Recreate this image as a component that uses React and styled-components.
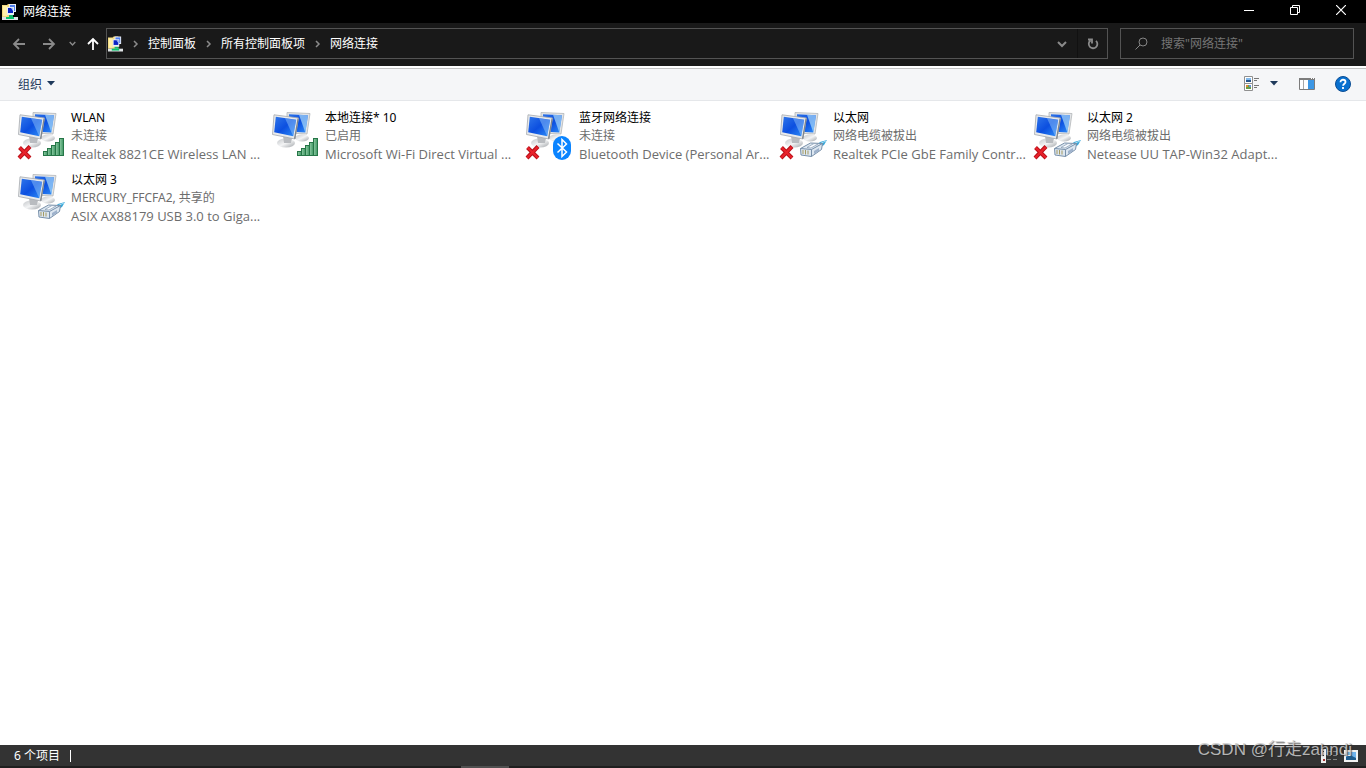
import React from "react";
import styled, { createGlobalStyle } from "styled-components";

const fonte = `"Noto Sans", "Noto Sans CJK SC", sans-serif`;
const fonteDevice = `"Open Sans", "Noto Sans CJK SC", sans-serif`;

const GlobalStyle = createGlobalStyle`
  * {
    box-sizing: border-box;
  }
  body {
    margin: 0;
    background: #ffffff;
    font-family: ${fonte};
    font-size: 12px;
  }
  button, input {
    margin: 0;
    padding: 0;
    border: none;
    background: none;
    color: inherit;
    font: inherit;
  }
  svg {
    display: block;
    flex-shrink: 0;
  }
`;

const Window = styled.div`
  position: relative;
  display: flex;
  flex-direction: column;
  min-height: 100vh;
`;
const TitleBar = styled.header`
  display: flex;
  align-items: center;
  height: 23px;
  padding: 0 2px;
  background: #000000;
  color: #ffffff;
`;
const Title = styled.h1`
  flex: 1;
  margin: 0 0 0 5px;
  font-size: 12px;
  font-weight: 400;
  line-height: 22px;
`;
const WindowButton = styled.button`
  display: flex;
  align-items: center;
  align-self: flex-start;
  justify-content: center;
  width: 46px;
  height: 20px;
`;
const NavBar = styled.nav`
  display: flex;
  align-items: center;
  height: 43px;
  padding: 0 12px 2px 4px;
  background: #191919;
`;
const NavButton = styled.button`
  display: flex;
  align-items: center;
  justify-content: center;
  width: ${(props) => props.$width}px;
  height: 29px;
  color: ${(props) => (props.$active ? "#ffffff" : "#8a8a8a")};
  border-left: ${(props) => (props.$divider ? "1px solid #111111" : "none")};
`;
const AddressBar = styled.div`
  display: flex;
  flex: 1;
  align-items: center;
  height: 31px;
  padding-left: 1px;
  border: 1px solid #535353;
`;
const Crumbs = styled.ol`
  display: flex;
  flex: 1;
  align-items: center;
  margin: 0;
  padding: 0;
  list-style: none;
`;
const Crumb = styled.li`
  display: flex;
  align-items: center;
  line-height: 28px;
  > svg {
    width: 25px;
  }
  a {
    color: #ffffff;
    text-decoration: none;
  }
`;
const SearchBox = styled.label`
  display: flex;
  align-items: center;
  width: 234px;
  height: 31px;
  margin-left: 12px;
  padding: 0 12px 0 14px;
  gap: 13px;
  border: 1px solid #535353;
  input {
    flex: 1;
    min-width: 0;
    height: 28px;
    outline: none;
    color: #ffffff;
  }
  input::placeholder {
    color: #757575;
    opacity: 1;
  }
`;
const CommandBar = styled.div`
  display: flex;
  align-items: center;
  height: 33px;
  margin-top: 2px;
  padding: 0 15px 2px 18px;
  border-top: 1px solid #c3c3c3;
  border-bottom: 1px solid #e5e7ea;
  background: #f5f6f8;
  color: #1e395b;
`;
const Organize = styled.button`
  display: flex;
  align-items: center;
  gap: 5px;
  margin-right: auto;
`;
const ToolButton = styled.button`
  display: flex;
  align-items: center;
  gap: 10px;
  margin-left: ${(props) => props.$space || 0}px;
`;
const Content = styled.main`
  flex: 1;
  padding: 8px 0 0 17px;
`;
const List = styled.ul`
  display: grid;
  grid-template-columns: repeat(auto-fill, 254px);
  grid-auto-rows: 62px;
  margin: 0;
  padding: 0;
  list-style: none;
`;
const Item = styled.button`
  display: flex;
  gap: 6px;
  width: 100%;
  text-align: left;
  white-space: nowrap;
  > svg {
    margin-top: 3px;
  }
`;
const Lines = styled.span`
  display: flex;
  flex-direction: column;
  color: #6d6d6d;
  line-height: 18px;
`;
const Name = styled.span`
  color: #000000;
`;
const Device = styled.span`
  font-family: ${fonteDevice};
  font-size: 13px;
`;
const StatusBar = styled.footer`
  display: flex;
  align-items: center;
  height: 21px;
  padding: 1px 8px 0 14px;
  background: #333333;
  color: #ffffff;
`;
const Count = styled.span`
  margin-right: auto;
  padding-right: 10px;
  border-right: 1px solid #ffffff;
  line-height: 12px;
`;
const ViewButton = styled.button`
  margin-left: 6px;
`;
const TaskEdge = styled.div`
  height: 2px;
  padding-left: 461px;
  background: #1f1f1f;
`;
const TaskMark = styled.div`
  width: 48px;
  height: 2px;
  background: #505050;
`;
const Watermark = styled.span`
  position: absolute;
  right: 14px;
  bottom: 6px;
  color: rgba(205, 205, 205, 0.85);
  font-family: "Liberation Sans", "Noto Sans CJK SC", sans-serif;
  font-size: 17px;
  line-height: 24px;
  text-shadow: 1px 1px 1px rgba(40, 40, 40, 0.7);
  pointer-events: none;
`;

const connections = [
  { name: "WLAN", status: "未连接", device: "Realtek 8821CE Wireless LAN ...", badge: "bars", off: true },
  { name: "本地连接* 10", status: "已启用", device: "Microsoft Wi-Fi Direct Virtual ...", badge: "bars" },
  { name: "蓝牙网络连接", status: "未连接", device: "Bluetooth Device (Personal Ar...", badge: "bluetooth", off: true },
  { name: "以太网", status: "网络电缆被拔出", device: "Realtek PCIe GbE Family Contr...", badge: "cable", off: true },
  { name: "以太网 2", status: "网络电缆被拔出", device: "Netease UU TAP-Win32 Adapt...", badge: "cable", off: true },
  { name: "以太网 3", status: "MERCURY_FFCFA2, 共享的", device: "ASIX AX88179 USB 3.0 to Giga...", badge: "cable" },
];

function FolderIcon({ width = 16 }) {
  return (
    <svg width={width} height="18" viewBox="0 0 16 18" aria-hidden="true">
      <path d="M0 2h5l1-1h5v13H0z" fill="#f3d980" />
      <path d="M1 3h4v10H1z" fill="#fff0a8" />
      <path d="M7 1h7v8H7z" fill="#e8edf5" />
      <path d="M8 2h5v6H8z" fill="#4f7ff0" />
      <path d="M5 4h7v8H5z" fill="#e8edf5" />
      <path d="M6 5h5v5H6z" fill="#0a22c4" />
      <path d="M9 5h2v3z" fill="#a8c5ff" />
      <path d="M7 12h4v3H7z" fill="#19b46b" />
      <path d="M0 14h16v3H0z" fill="#dfe3e5" />
      <path d="M4 14h8v2H4z" fill="#08c46b" />
    </svg>
  );
}

function Chevron({ down, size = 7 }) {
  return (
    <svg width={size + 3} height={size + 3} viewBox="0 0 10 10" fill="none" stroke={down ? "currentColor" : "#8a8a8a"} strokeWidth={down ? 2 : 1.5}>
      <path d={down ? "M1 3l4 4 4-4" : "M3.5 2l3 3-3 3"} />
    </svg>
  );
}

function Arrow({ rotate = 0 }) {
  return (
    <svg width="14" height="14" viewBox="0 0 14 14" fill="none" stroke="currentColor" strokeWidth="1.8">
      <path d="M13 7H2M7 2L2 7l5 5" transform={`rotate(${rotate} 7 7)`} />
    </svg>
  );
}

function Caret() {
  return (
    <svg width="8" height="5" viewBox="0 0 8 5">
      <path d="M0 0h8L4 4.500z" fill="#1e395b" />
    </svg>
  );
}

function Bars() {
  const heights = [4, 7, 10, 13, 17];
  return heights.map((h, i) => (
    <rect key={h} x={26.5 + i * 4} y={43.5 - h} width="4" height={h} fill="url(#green)" stroke="#257647" />
  ));
}

function Bluetooth() {
  return (
    <g>
      <rect x="28" y="24" width="18" height="24" rx="9" fill="#0a84ff" />
      <path d="M32.500 31.500l9 8.500-4.500 4.500V27.500l4.500 4.500-9 8.500" fill="none" stroke="#ffffff" strokeWidth="1.5" />
    </g>
  );
}

function Cable() {
  return (
    <g strokeLinejoin="round">
      <path d="M37 34l4-4 7-2-3 5-5 3z" fill="#36a5d8" />
      <path d="M40 32l7-3" stroke="#a5def4" />
      <path d="M21.500 36.500l10-5.500 12 .5-1 6-10 7-10.500-1.500z" fill="#dce6f0" stroke="#7890aa" />
      <path d="M21.500 36.500l11 1 11-6M32.500 37.500v7" fill="none" stroke="#7890aa" />
      <path d="M28 35.500l7-4 4 .5-7 4z" fill="#f8fbff" stroke="#8499b0" strokeWidth=".7" />
      <path d="M35 39l5-3v3l-5 3z" fill="#9eb2cc" />
      <path d="M24 38v4M26.500 38v4.500M29 38.500v4" stroke="#a49a62" />
    </g>
  );
}

function ConnectionIcon({ badge, off }) {
  return (
    <svg width="48" height="48" viewBox="0 0 48 48" aria-hidden="true">
      <ellipse cx="31" cy="26" rx="7" ry="3.500" fill="url(#metal)" />
      <path d="M16 .5l23 1-3 20.500-20-1z" fill="#e2e4e6" stroke="#b3b6b9" strokeWidth=".8" />
      <path d="M18 2.300l19 .9-2.700 17.300-17-1z" fill="url(#screen)" />
      <path d="M28 2.800l9 .4-2.700 17.300z" fill="#a8dafa" opacity=".7" />
      <ellipse cx="15" cy="31" rx="9" ry="4.500" fill="url(#metal)" />
      <path d="M12 24l9 2-1 5h-7z" fill="#b9bcc0" />
      <path d="M3 2.800L27.500 6l-3.500 21-22.500-4.500z" fill="#e8eaec" stroke="#a6aaae" strokeWidth=".8" />
      <path d="M26.500 6.500l1.200 0-3.500 20.500-1.200-.5z" fill="#7d858d" />
      <path d="M4.800 4.800l20.400 3-3 16.400-19-4z" fill="url(#screen)" />
      <path d="M14 6.200l11.200 1.600-3 16.400z" fill="#8fc4fa" opacity=".5" />
      {badge === "bars" && <Bars />}
      {badge === "bluetooth" && <Bluetooth />}
      {badge === "cable" && <Cable />}
      {off && (
        <g fill="none">
          <path d="M2.500 35.500l10.500 10.500M13 34.500L2 46" stroke="#b80f18" strokeWidth="4" />
          <path d="M2.800 35.800l10 10M12.700 35L2.300 45.700" stroke="#e8222b" strokeWidth="2.200" />
        </g>
      )}
    </svg>
  );
}

function Gradients() {
  return (
    <svg width="0" height="0" style={{ position: "absolute" }} aria-hidden="true">
      <defs>
        <linearGradient id="screen" x1="0" y1="0" x2="1" y2="1">
          <stop offset="0" stopColor="#2f76ea" />
          <stop offset=".5" stopColor="#0c4fe0" />
          <stop offset="1" stopColor="#2f8ff8" />
        </linearGradient>
        <linearGradient id="metal" x1="0" y1="0" x2="1" y2="1">
          <stop offset="0" stopColor="#c3c6c9" />
          <stop offset=".5" stopColor="#f3f4f5" />
          <stop offset="1" stopColor="#a0a4a8" />
        </linearGradient>
        <linearGradient id="green" x1="0" y1="0" x2="1" y2="0">
          <stop offset="0" stopColor="#8fcca5" />
          <stop offset="1" stopColor="#3d9562" />
        </linearGradient>
      </defs>
    </svg>
  );
}

export default function App() {
  return (
    <Window>
      <GlobalStyle />
      <Gradients />
      <TitleBar>
        <FolderIcon />
        <Title>网络连接</Title>
        <WindowButton aria-label="最小化">
          <svg width="10" height="10" viewBox="0 0 10 10">
            <path d="M0 5.500h10" stroke="#ffffff" />
          </svg>
        </WindowButton>
        <WindowButton aria-label="还原">
          <svg width="10" height="10" viewBox="0 0 10 10" fill="none" stroke="#ffffff">
            <path d="M.5 2.500h7v7h-7zM2.500 2.500v-2h7v7h-2" />
          </svg>
        </WindowButton>
        <WindowButton aria-label="关闭">
          <svg width="10" height="10" viewBox="0 0 10 10" fill="none" stroke="#ffffff" strokeWidth="1.2">
            <path d="M0 0l10 10M10 0L0 10" />
          </svg>
        </WindowButton>
      </TitleBar>
      <NavBar>
        <NavButton $width={30} aria-label="后退">
          <Arrow />
        </NavButton>
        <NavButton $width={30} aria-label="前进">
          <Arrow rotate={180} />
        </NavButton>
        <NavButton $width={16} aria-label="最近位置">
          <Chevron down size={4} />
        </NavButton>
        <NavButton $width={26} $active aria-label="上移">
          <Arrow rotate={90} />
        </NavButton>
        <AddressBar>
          <FolderIcon width={15} />
          <Crumbs>
            {["控制面板", "所有控制面板项", "网络连接"].map((crumb) => (
              <Crumb key={crumb}>
                <Chevron />
                <a href="#">{crumb}</a>
              </Crumb>
            ))}
          </Crumbs>
          <NavButton $width={30} aria-label="以前的位置">
            <Chevron down />
          </NavButton>
          <NavButton $width={30} $divider aria-label="刷新">
            <svg width="12" height="12" viewBox="0 0 12 12" fill="none" stroke="currentColor" strokeWidth="1.8">
              <path d="M9 2.800a4.300 4.300 0 1 1-5.500-.3M1 1.500h4v4" />
            </svg>
          </NavButton>
        </AddressBar>
        <SearchBox>
          <svg width="13" height="13" viewBox="0 0 13 13" fill="none" stroke="#858585">
            <circle cx="8" cy="5" r="4" />
            <path d="M5 8L.5 12.500" />
          </svg>
          <input type="text" aria-label="搜索" placeholder={'搜索"网络连接"'} />
        </SearchBox>
      </NavBar>
      <CommandBar>
        <Organize>
          组织
          <Caret />
        </Organize>
        <ToolButton aria-label="更改视图">
          <svg width="16" height="16" viewBox="0 0 16 16">
            <path d="M.5 .5h8v7h-8zM.5 7.500h8v7h-8z" fill="#ffffff" stroke="#909090" />
            <path d="M2 2h5v2H2z" fill="#82b9ec" />
            <path d="M2 4h5v2H2z" fill="#28568c" />
            <path d="M2 9h5v4H2z" fill="#6b9f45" />
            <path d="M2 9h2v2H2z" fill="#e28735" />
            <path d="M5 9h2v2H5z" fill="#6690d8" />
            <path d="M10 2.500h5M10 4.500h3M10 9.500h5M10 11.500h3" stroke="#777777" />
          </svg>
          <Caret />
        </ToolButton>
        <ToolButton $space={21} aria-label="显示预览窗格">
          <svg width="16" height="12" viewBox="0 0 16 12">
            <path d="M.5 .5h15v11H.5z" fill="#ffffff" stroke="#7c7c7c" />
            <path d="M0 0h16v2H0z" fill="#7c7c7c" />
            <path d="M4.500 2v9" stroke="#a8a8a8" />
            <path d="M9 2h6v9H9z" fill="#3d97e5" />
            <path d="M12 .5h1M14 .5h1" stroke="#ffffff" />
          </svg>
        </ToolButton>
        <ToolButton $space={20} aria-label="帮助">
          <svg width="16" height="16" viewBox="0 0 16 16">
            <circle cx="8" cy="8" r="7.500" fill="#0870cf" stroke="#0b4d94" />
            <path d="M5.500 6.200c0-3.400 5-3 5-.3 0 1.900-2.400 1.700-2.400 3.900M8 11v2" fill="none" stroke="#ffffff" strokeWidth="1.800" />
          </svg>
        </ToolButton>
      </CommandBar>
      <Content>
        <List>
          {connections.map((c) => (
            <li key={c.name}>
              <Item>
                <ConnectionIcon badge={c.badge} off={c.off} />
                <Lines>
                  <Name>{c.name}</Name>
                  <span>{c.status}</span>
                  <Device>{c.device}</Device>
                </Lines>
              </Item>
            </li>
          ))}
        </List>
      </Content>
      <StatusBar>
        <Count>6 个项目</Count>
        <ViewButton aria-label="详细信息">
          <svg width="17" height="14" viewBox="0 0 17 14">
            <path d="M0 0h5v14H0z" fill="#eeeeee" />
            <path d="M2 2h1v1H2zM2 6h1v1H2z" fill="#333333" />
            <path d="M2 10h2v2H2z" fill="#a33333" />
            <path d="M6 2.500h4M12 2.500h4M6 6.500h4M12 6.500h4M6 10.500h4M12 10.500h4" stroke="#808080" />
          </svg>
        </ViewButton>
        <ViewButton aria-label="大图标">
          <svg width="14" height="12" viewBox="0 0 14 12">
            <path d="M0 0h14v12H0z" fill="#f3f3f3" />
            <path d="M2 2h10v8H2z" fill="#6fb4ee" />
            <path d="M2 7l4-2 6 3v2H2z" fill="#1f5c8e" />
            <path d="M2 5h5v1H2z" fill="#ffffff" />
          </svg>
        </ViewButton>
      </StatusBar>
      <TaskEdge>
        <TaskMark />
      </TaskEdge>
      <Watermark>CSDN @行走zahndi</Watermark>
    </Window>
  );
}
